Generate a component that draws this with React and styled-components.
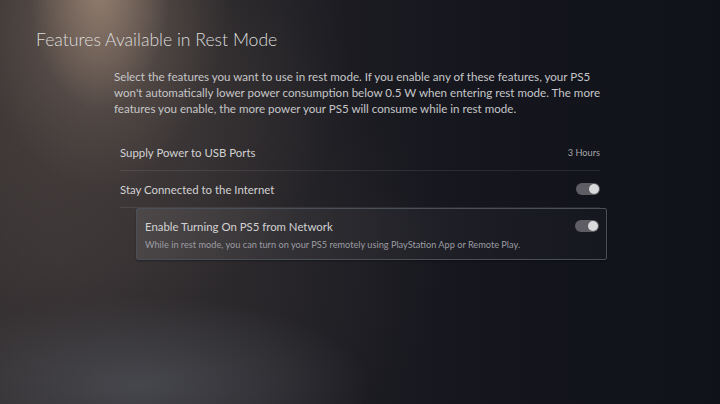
import React from 'react';
import styled, { createGlobalStyle } from 'styled-components';

const GlobalStyle = createGlobalStyle`
  html, body {
    margin: 0;
    padding: 0;
    background: #13141b;
  }

  body {
    font-family: Lato, 'Noto Sans', sans-serif;
    -webkit-font-smoothing: antialiased;
  }
`;

const Screen = styled.div`
  width: 720px;
  height: 404px;
  overflow: hidden;
  box-sizing: border-box;
  padding: 28px 0 0 36px;
  background:
    radial-gradient(ellipse 70px 120px at 100px -10px, rgba(190, 162, 140, 0.5), rgba(190, 162, 140, 0) 100%),
    radial-gradient(ellipse 130px 210px at 100px -20px, rgba(160, 136, 118, 0.4), rgba(160, 136, 118, 0) 100%),
    radial-gradient(ellipse 260px 260px at 90px 60px, rgba(110, 96, 88, 0.4), rgba(110, 96, 88, 0) 100%),
    radial-gradient(ellipse 230px 90px at 140px 385px, rgba(86, 90, 98, 0.6), rgba(86, 90, 98, 0) 100%),
    radial-gradient(ellipse 380px 300px at 60px 260px, rgba(70, 62, 62, 0.55), rgba(70, 62, 62, 0) 100%),
    linear-gradient(90deg, #2a2729 0%, #1e1e23 40%, #14151d 70%, #10121a 100%);
`;

const Title = styled.h1`
  margin: 0;
  font-size: 17.6px;
  line-height: 24px;
  font-weight: 300;
  color: #dcdcdc;
`;

const Body = styled.div`
  margin: 17px 0 0 78px;
  width: 494px;
`;

const Intro = styled.p`
  margin: 0;
  font-size: 11.6px;
  line-height: 16px;
  color: #c6c6c8;
`;

const List = styled.div`
  margin: 17px 0 0 84px;
  width: 480px;
`;

const Row = styled.div`
  display: flex;
  align-items: center;
  justify-content: space-between;
  height: 36px;
  border-bottom: 1px solid rgba(255, 255, 255, 0.09);
`;

const Label = styled.span`
  font-size: 11.4px;
  color: #d2d2d4;
`;

const Value = styled.span`
  font-size: 9.2px;
  color: #a6a6aa;
`;

const Card = styled.div`
  margin-left: 16px;
  width: 471px;
  box-sizing: border-box;
  padding: 8px 7px 8px 8px;
  border: 1px solid #4b4f58;
  border-radius: 2px;
  background: linear-gradient(90deg, rgba(255, 255, 255, 0.09) 0%, rgba(255, 255, 255, 0.05) 35%, rgba(255, 255, 255, 0.015) 100%);
  box-shadow: 0 1px 2px rgba(0, 0, 0, 0.35);
`;

const CardHead = styled.div`
  display: flex;
  align-items: center;
  justify-content: space-between;
  height: 18px;
`;

const Hint = styled.div`
  margin-top: 3px;
  font-size: 9.2px;
  line-height: 13px;
  color: #9c9ca2;
`;

const Track = styled.span`
  position: relative;
  display: inline-block;
  width: 24px;
  height: 12px;
  border-radius: 6px;
  background: ${({ on }) => (on ? '#5d5d63' : '#3a3a40')};
`;

const Knob = styled.span`
  position: absolute;
  top: 1px;
  left: ${({ on }) => (on ? '13px' : '1px')};
  width: 10px;
  height: 10px;
  border-radius: 50%;
  background: #dadadc;
`;

const Toggle = ({ on }) => (
  <Track on={on ? 1 : 0}>
    <Knob on={on ? 1 : 0} />
  </Track>
);

const App = () => {
  return (
    <Screen>
      <GlobalStyle />
      <Title>Features Available in Rest Mode</Title>
      <Body>
        <Intro>
          Select the features you want to use in rest mode. If you enable any of these features, your PS5
          won't automatically lower power consumption below 0.5 W when entering rest mode. The more
          features you enable, the more power your PS5 will consume while in rest mode.
        </Intro>
      </Body>
      <List>
        <Row>
          <Label>Supply Power to USB Ports</Label>
          <Value>3 Hours</Value>
        </Row>
        <Row>
          <Label>Stay Connected to the Internet</Label>
          <Toggle on />
        </Row>
        <Card>
          <CardHead>
            <Label>Enable Turning On PS5 from Network</Label>
            <Toggle on />
          </CardHead>
          <Hint>While in rest mode, you can turn on your PS5 remotely using PlayStation App or Remote Play.</Hint>
        </Card>
      </List>
    </Screen>
  );
};

export default App;
